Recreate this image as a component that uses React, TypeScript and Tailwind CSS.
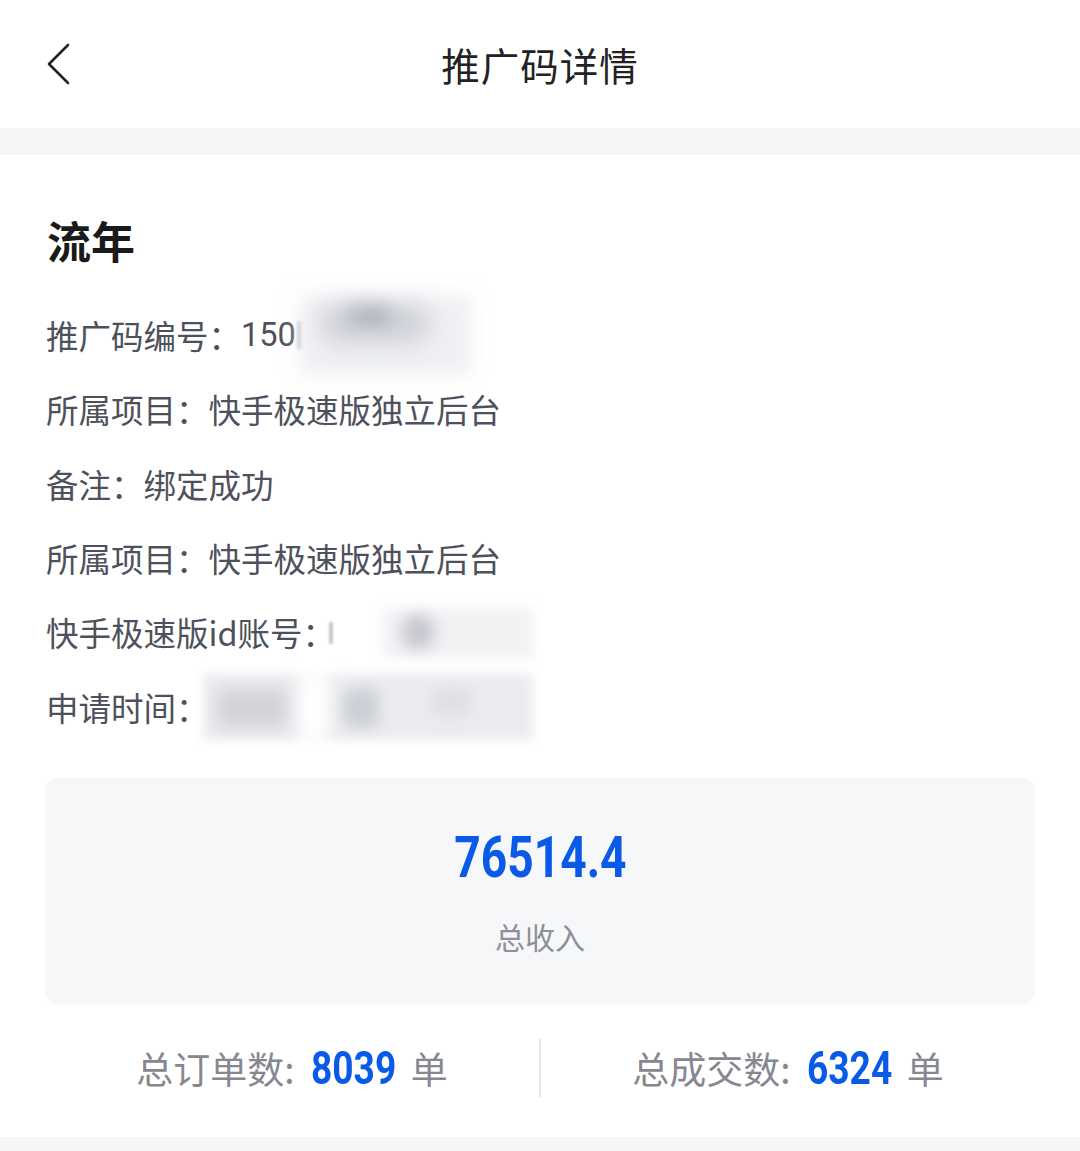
import React from "react";

function Blur({ className, children }: { className: string; children?: React.ReactNode }) {
  return <span className={"inline-block align-middle " + className}>{children}</span>;
}

export default function App() {
  const cjk = "font-['Noto_Sans_CJK_SC','Noto_Sans',sans-serif]";
  const num = "font-['Roboto','Noto_Sans_CJK_SC',sans-serif]";
  return (
    <div className={"w-[1080px] min-h-[1151px] bg-[#f5f6f8] " + cjk}>
      <header className="h-[128px] bg-white grid grid-cols-[1fr_auto_1fr] items-center px-[44px]">
        <div className="flex items-center">
          <svg width="28" height="44" viewBox="0 0 28 44" fill="none">
            <path d="M24 3 L5 22 L24 41" stroke="#222" strokeWidth="2.6" strokeLinecap="round" strokeLinejoin="round" />
          </svg>
        </div>
        <h1 className="text-[38.5px] leading-none text-[#222] tracking-[1px]">推广码详情</h1>
        <div />
      </header>
      <div className="h-[27px]" />
      <main className="bg-white px-[45px] pt-[56px] pb-[40px]">
        <h2 className="text-[44px] leading-[58px] font-bold text-[#1a1a1a] pl-[2px]">流年</h2>
        <div className="mt-[29px] flex flex-col text-[32.5px] text-[#4e515b] pl-[1px]">
          <div className="h-[74.4px] flex items-center whitespace-nowrap">
            <span>推广码编号：</span>
            <span className={num + " text-[32.5px]"}>150</span>
            <span className="inline-block w-[5px] h-[28px] bg-[#c4c6cd] blur-[1.5px] ml-[1px]" />
            <Blur className="relative w-[170px] h-[80px] -ml-[2px] bg-[#eef0f3] blur-[9px]">
              <span className="absolute left-[20px] top-[8px] w-[110px] h-[40px] rounded-full bg-[#cfd1d8] blur-[8px]" />
              <span className="absolute left-[50px] top-[14px] w-[40px] h-[12px] rounded-full bg-[#9599a8] blur-[5px]" />
            </Blur>
          </div>
          <div className="h-[74.4px] flex items-center">所属项目：快手极速版独立后台</div>
          <div className="h-[74.4px] flex items-center">备注：绑定成功</div>
          <div className="h-[74.4px] flex items-center">所属项目：快手极速版独立后台</div>
          <div className="h-[74.4px] flex items-center whitespace-nowrap">
            <span>快手极速版id账号：</span>
            <span className="inline-block w-[4px] h-[22px] bg-[#c6c8cf] blur-[1px] -ml-[6px]" />
            <Blur className="relative w-[150px] h-[50px] ml-[50px] bg-[#f1f2f4] blur-[6px]">
              <span className="absolute left-[18px] top-[6px] w-[34px] h-[36px] rounded-full bg-[#c7c9d0] blur-[5px]" />
            </Blur>
          </div>
          <div className="h-[74.4px] flex items-center whitespace-nowrap">
            <span>申请时间：</span>
            <Blur className="relative w-[330px] h-[66px] -ml-[6px] bg-[#ebecef] blur-[5px]">
              <span className="absolute left-[14px] top-[14px] w-[70px] h-[40px] rounded-[10px] bg-[#d2d4da] blur-[6px]" />
              <span className="absolute left-[140px] top-[14px] w-[36px] h-[40px] rounded-[10px] bg-[#cdd0d6] blur-[5px]" />
              <span className="absolute left-[228px] top-[14px] w-[40px] h-[28px] rounded-[10px] bg-[#dfe0e4] blur-[5px]" />
              <span className="absolute left-[96px] top-[0px] w-[30px] h-[66px] bg-white blur-[6px]" />
            </Blur>
          </div>
        </div>

        <section className="mt-[34px] h-[225px] rounded-[14px] bg-[#f6f7f9] shadow-[0_1px_3px_rgba(0,0,0,0.04)] flex flex-col items-center pt-[51px]">
          <div className="h-[56px] flex items-center justify-center">
            <span className={num + " inline-block text-[57px] leading-none font-bold text-[#0a5ae8] scale-x-[0.81]"}>76514.4</span>
          </div>
          <div className="mt-[36px] text-[30px] leading-[30px] text-[#8e9097]">总收入</div>
        </section>

        <div className="mt-[36px] h-[58px] flex items-stretch">
          <div className="flex-1 flex items-center justify-center text-[37px] text-[#86888f] whitespace-nowrap">
            <span>总订单数:</span>
            <span className="inline-block w-[86px] ml-[16px] overflow-visible">
              <span className={num + " inline-block origin-left scale-x-[0.79] text-[47px] leading-none font-bold text-[#0a5ae8]"}>8039</span>
            </span>
            <span className="ml-[14px]">单</span>
          </div>
          <div className="w-[2px] bg-[#e6e7ea]" />
          <div className="flex-1 flex items-center justify-center text-[37px] text-[#86888f] whitespace-nowrap">
            <span>总成交数:</span>
            <span className="inline-block w-[86px] ml-[16px] overflow-visible">
              <span className={num + " inline-block origin-left scale-x-[0.79] text-[47px] leading-none font-bold text-[#0a5ae8]"}>6324</span>
            </span>
            <span className="ml-[14px]">单</span>
          </div>
        </div>
      </main>
    </div>
  );
}
